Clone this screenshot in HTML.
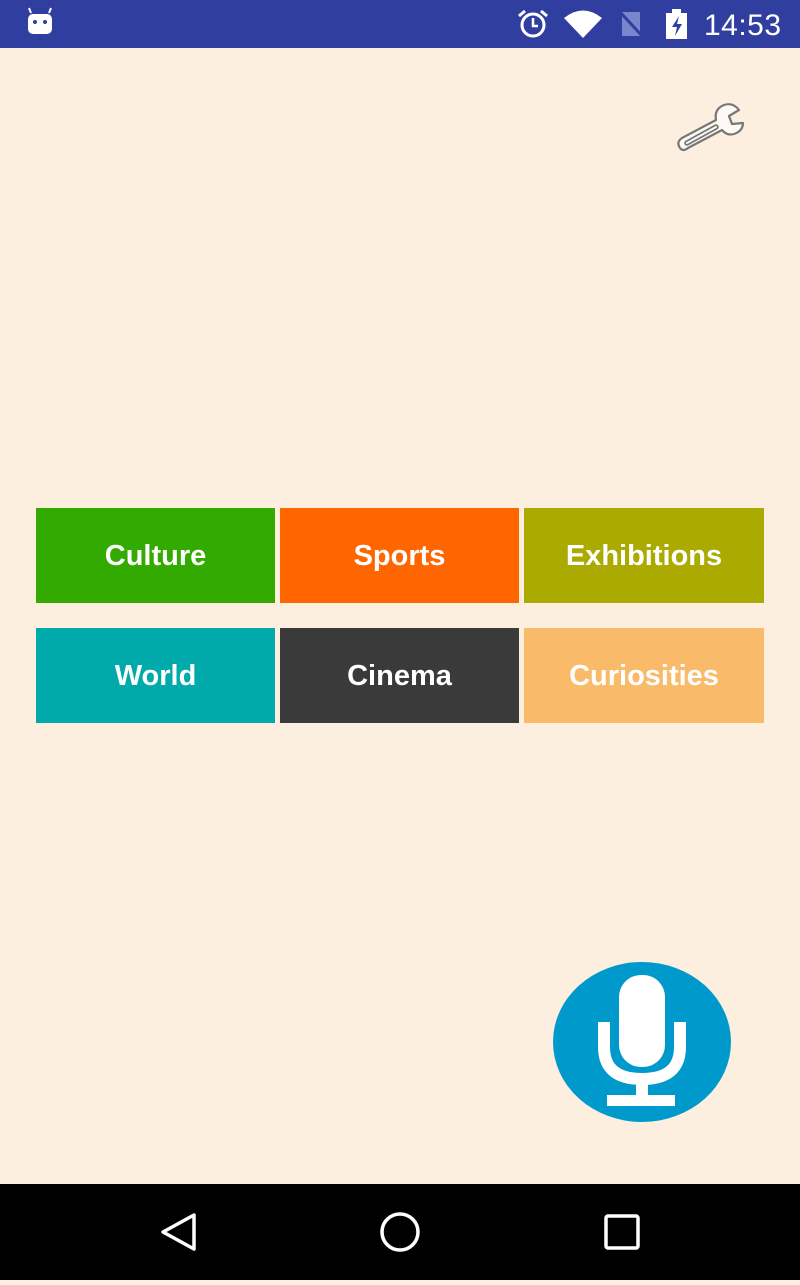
<!DOCTYPE html>
<html><head><style>
body{margin:0;width:800px;height:1280px;background:#fdefdf;position:relative;overflow:hidden;font-family:"Liberation Sans",sans-serif}
.sb{position:absolute;left:0;top:0;width:800px;height:48px;background:#303f9f}
.nb{position:absolute;left:0;top:1184px;width:800px;height:96px;background:#000}
.b{position:absolute;height:95px;color:#fff;font-weight:bold;font-size:29px;display:flex;align-items:center;justify-content:center;padding-top:2px;box-sizing:border-box}
</style></head><body>
<div class="sb">
<svg width="800" height="48" style="position:absolute;left:0;top:0">
<rect x="28" y="14" width="24" height="20" rx="5" fill="#fff"/>
<line x1="31" y1="13" x2="29" y2="8" stroke="#fff" stroke-width="2"/><line x1="49" y1="13" x2="51" y2="8" stroke="#fff" stroke-width="2"/>
<circle cx="35" cy="22" r="2" fill="#303f9f"/><circle cx="45" cy="22" r="2" fill="#303f9f"/>
<circle cx="533" cy="25" r="11" fill="none" stroke="#fff" stroke-width="3"/>
<path d="M533 18v8h5" fill="none" stroke="#fff" stroke-width="2.5"/>
<path d="M519 16l6-5M547 16l-6-5" stroke="#fff" stroke-width="3"/>
<path d="M564 18Q583 3 602 18L583 38Z" fill="#fff"/>
<path d="M622 12h18v24h-18z" fill="#7986cb"/>
<line x1="620" y1="12" x2="644" y2="38" stroke="#303f9f" stroke-width="3"/>
<rect x="666" y="13" width="21" height="26" fill="#fff"/><rect x="672" y="9" width="9" height="5" fill="#fff"/>
<path d="M679 16l-7 11h5l-2 9 7-12h-5z" fill="#303f9f"/>
<text x="704" y="35" fill="#fff" font-size="30" font-family="Liberation Sans" textLength="77">14:53</text>
</svg></div>
<svg width="100" height="70" style="position:absolute;left:666px;top:90px">
<path d="M22 58L56 40Q61 46 68 44Q77 41 77 33L66 34L63 26L73 20Q67 12 58 15Q48 19 50 30L16 48Q10 52 14 58Q17 62 22 58Z" fill="#fdfaf6" stroke="#777" stroke-width="2.2" stroke-linejoin="round"/>
<path d="M21 53L50 37" stroke="#777" stroke-width="5.5" stroke-linecap="round"/>
<path d="M21 53L50 37" stroke="#fdfaf6" stroke-width="2" stroke-linecap="round"/>
</svg>
<div class="b" style="left:36px;top:508px;width:239px;background:#33aa00">Culture</div>
<div class="b" style="left:280px;top:508px;width:239px;background:#ff6600">Sports</div>
<div class="b" style="left:524px;top:508px;width:240px;background:#aaaa00">Exhibitions</div>
<div class="b" style="left:36px;top:628px;width:239px;background:#00aaaa">World</div>
<div class="b" style="left:280px;top:628px;width:239px;background:#3b3a3a">Cinema</div>
<div class="b" style="left:524px;top:628px;width:240px;background:#f9bb6a">Curiosities</div>
<svg width="800" height="300" style="position:absolute;left:0;top:940px">
<ellipse cx="642" cy="102" rx="89" ry="80" fill="#0099cc"/>
<rect x="619" y="35" width="46" height="92" rx="22" fill="#fff"/>
<path d="M604 82v25q0 32 38 32q38 0 38-32v-25" fill="none" stroke="#fff" stroke-width="12"/>
<rect x="636" y="138" width="12" height="20" fill="#fff"/>
<rect x="607" y="155" width="68" height="11" fill="#fff"/>
</svg>
<div class="nb">
<svg width="800" height="96">
<path d="M194 31L163 48L194 65Z" fill="none" stroke="#fff" stroke-width="3.5" stroke-linejoin="round"/>
<circle cx="400" cy="48" r="18" fill="none" stroke="#fff" stroke-width="3.5"/>
<rect x="606" y="32" width="32" height="32" rx="2" fill="none" stroke="#fff" stroke-width="3.5"/>
</svg></div>
</body></html>
